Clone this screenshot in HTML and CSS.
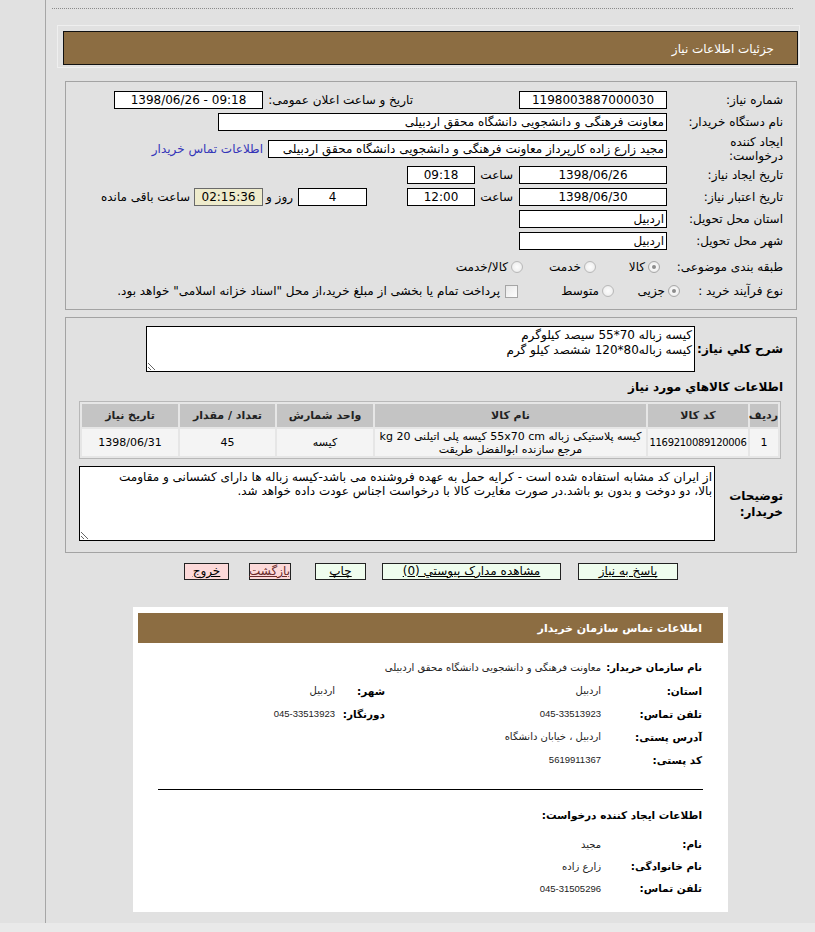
FILE: index.html
```html
<!DOCTYPE html>
<html lang="fa">
<head>
<meta charset="utf-8">
<title>جزئیات اطلاعات نیاز</title>
<link rel="stylesheet" href="styles.css">
</head>
<body>
<div class="page">
  <div class="topline"></div>
  <div class="titlewrap"><div class="title">جزئیات اطلاعات نیاز</div></div>

  <div class="box box1">
    <div class="row">
      <div class="lbl">شماره نیاز:</div>
      <div class="field c w148">1198003887000030</div>
      <div class="lbl2">تاریخ و ساعت اعلان عمومی:</div>
      <div class="field c w149" dir="ltr">1398/06/26 - 09:18</div>
    </div>
    <div class="row">
      <div class="lbl">نام دستگاه خریدار:</div>
      <div class="field w449">معاونت فرهنگی و دانشجویی دانشگاه محقق اردبیلی</div>
    </div>
    <div class="row row3">
      <div class="lbl two">ایجاد کننده<br>درخواست:</div>
      <div class="field w399">مجید زارع زاده کارپرداز معاونت فرهنگی و دانشجویی دانشگاه محقق اردبیلی</div>
      <a class="link" href="#">اطلاعات تماس خریدار</a>
    </div>
    <div class="row">
      <div class="lbl">تاریخ ایجاد نیاز:</div>
      <div class="field c w148">1398/06/26</div>
      <div class="saat">ساعت</div>
      <div class="field c w68">09:18</div>
    </div>
    <div class="row">
      <div class="lbl">تاریخ اعتبار نیاز:</div>
      <div class="field c w148">1398/06/30</div>
      <div class="saat">ساعت</div>
      <div class="field c w68">12:00</div>
      <div class="field c w69 days">4</div>
      <div class="rooz">روز و</div>
      <div class="field c w69 remain">02:15:36</div>
      <div class="remaintxt">ساعت باقی مانده</div>
    </div>
    <div class="row">
      <div class="lbl">استان محل تحویل:</div>
      <div class="field w148">اردبیل</div>
    </div>
    <div class="row">
      <div class="lbl">شهر محل تحویل:</div>
      <div class="field w148">اردبیل</div>
    </div>
    <div class="row row8">
      <div class="lbl">طبقه بندی موضوعی:</div>
      <div class="opts8">
        <div class="opt o1"><span class="radio on"></span><span class="otext">کالا</span></div>
        <div class="opt o2"><span class="radio"></span><span class="otext">خدمت</span></div>
        <div class="opt"><span class="radio"></span><span class="otext">کالا/خدمت</span></div>
      </div>
    </div>
    <div class="row row9">
      <div class="lbl l9">نوع فرآیند خرید :</div>
      <div class="opt p1"><span class="radio on"></span><span class="otext">جزیی</span></div>
      <div class="opt p2"><span class="radio"></span><span class="otext">متوسط</span></div>
      <div class="opt"><span class="check"></span><span class="ctext">پرداخت تمام یا بخشی از مبلغ خرید،از محل "اسناد خزانه اسلامی" خواهد بود.</span></div>
    </div>
  </div>

  <div class="box box2">
    <div class="descrow">
      <div class="blbl">شرح کلي نياز:</div>
      <textarea class="ta ta1" readonly>کیسه زباله 70*55 سیصد کیلوگرم
کیسه زباله80*120 ششصد کیلو گرم</textarea>
    </div>
    <div class="heading">اطلاعات کالاهاي مورد نياز</div>
    <table class="goods">
      <thead>
        <tr>
          <th class="c1">ردیف</th>
          <th class="c2">کد کالا</th>
          <th class="c3">نام کالا</th>
          <th class="c4">واحد شمارش</th>
          <th class="c5">تعداد / مقدار</th>
          <th class="c6">تاریخ نیاز</th>
        </tr>
      </thead>
      <tbody>
        <tr>
          <td>1</td>
          <td class="code">1169210089120006</td>
          <td class="name">کیسه پلاستیکی زباله 55x70 cm کیسه پلی اتیلنی 20 kg<br>مرجع سازنده ابوالفضل طریقت</td>
          <td>کیسه</td>
          <td>45</td>
          <td>1398/06/31</td>
        </tr>
      </tbody>
    </table>
    <div class="descrow notes">
      <div class="blbl nlbl">توضیحات<br>خریدار:</div>
      <textarea class="ta ta2" readonly>از ایران کد مشابه استفاده شده است - کرایه حمل به عهده فروشنده می باشد-کیسه زباله ها دارای کشسانی و مقاومت
بالا، دو دوخت و بدون بو باشد.در صورت مغایرت کالا با درخواست اجناس عودت داده خواهد شد.</textarea>
    </div>
  </div>

  <div class="buttons">
    <span class="btn green b1">پاسخ به نیاز</span>
    <span class="btn green b2">مشاهده مدارک پیوستي (0)</span>
    <span class="btn green b3">چاپ</span>
    <span class="btn pink b4">بازگشت</span>
    <span class="btn pink b5">خروج</span>
  </div>

  <div class="contact">
    <div class="chead">اطلاعات تماس سازمان خریدار</div>
    <div class="cbody">
      <div class="crow first">
        <div class="clbl tight">نام سازمان خریدار:</div>
        <div class="cval wide">معاونت فرهنگی و دانشجویی دانشگاه محقق اردبیلی</div>
      </div>
      <div class="crow">
        <div class="clbl">استان:</div>
        <div class="cval">اردبیل</div>
        <div class="clbl clbl2">شهر:</div>
        <div class="cval">اردبیل</div>
      </div>
      <div class="crow">
        <div class="clbl">تلفن تماس:</div>
        <div class="cval num">045-33513923</div>
        <div class="clbl clbl2">دورنگار:</div>
        <div class="cval num">045-33513923</div>
      </div>
      <div class="crow">
        <div class="clbl">آدرس پستی:</div>
        <div class="cval">اردبیل ، خیابان دانشگاه</div>
      </div>
      <div class="crow">
        <div class="clbl">کد پستی:</div>
        <div class="cval num">5619911367</div>
      </div>
    </div>
    <div class="cline"></div>
    <div class="cbody">
      <div class="crow chead2">اطلاعات ایجاد کننده درخواست:</div>
      <div class="crow r22 gap">
        <div class="clbl">نام:</div>
        <div class="cval">مجید</div>
      </div>
      <div class="crow r22">
        <div class="clbl">نام خانوادگی:</div>
        <div class="cval">زارع زاده</div>
      </div>
      <div class="crow r22">
        <div class="clbl">تلفن تماس:</div>
        <div class="cval num">045-31505296</div>
      </div>
    </div>
  </div>
</div>
<div class="footband"></div>
</body>
</html>
```

FILE: styles.css
```css
html, body {
  margin: 0;
  padding: 0;
}
body {
  background: #e1e1e1;
  font-family: "DejaVu Sans", sans-serif;
  font-size: 12px;
  color: #000;
}
.page {
  margin-left: 45px;
  border-left: 1px solid #a6a6a6;
  min-height: 923px;
  box-sizing: border-box;
}
.footband {
  height: 9px;
  background: #e9e9e9;
}
.topline {
  height: 8px;
  margin: 0 22px 0 6px;
  border-bottom: 1px dotted #8a8a8a;
}
.titlewrap {
  margin: 16px 15px 0 11px;
  border: 1px solid #efefef;
  padding: 5px 1px 2px 5px;
}
.title {
  background: #8c6d42;
  border: 1px solid #111;
  height: 34px;
  box-sizing: border-box;
  color: #fff;
  display: flex;
  align-items: center;
  padding: 2px 23px 0 0;
  direction: rtl;
}

.box {
  margin: 13px 18px 0 19px;
  border: 1px solid #a3a3a3;
  direction: rtl;
}
.box1 {
  padding: 7px 13px 9px 0;
}
.row {
  display: flex;
  align-items: center;
  height: 22px;
}
.row3 { height: 31px; }
.row8 { height: 30px; }
.row9 { height: 18px; }
.lbl {
  width: 116px;
  flex: none;
  white-space: nowrap;
}
.lbl.two { line-height: 14px; }
.l9 { width: 103px; }
.lbl2 {
  width: 150px;
  margin-right: 106px;
  flex: none;
  white-space: nowrap;
}
.field {
  height: 18px;
  box-sizing: border-box;
  border: 1px solid #000;
  background: #fff;
  line-height: 16px;
  padding: 0 2px;
  white-space: nowrap;
  overflow: hidden;
  flex: none;
}
.c { text-align: center; }
.w148 { width: 148px; }
.w149 { width: 149px; }
.w449 { width: 449px; }
.w399 { width: 399px; }
.w68 { width: 68px; }
.w69 { width: 69px; }
.link {
  margin-right: 5px;
  color: #3434b8;
  text-decoration: none;
  white-space: nowrap;
}
.saat {
  width: 38px;
  margin-right: 6px;
  flex: none;
}
.days { margin-right: 40px; }
.rooz {
  width: 30px;
  margin-right: 5px;
  flex: none;
}
.remain {
  background: #eeebcc;
  border-color: #6a6a6a;
}
.remaintxt {
  margin-right: 4px;
  white-space: nowrap;
}
.opts8 {
  display: flex;
  margin-right: 7px;
}
.opt {
  display: flex;
  align-items: center;
  flex: none;
}
.o1 { width: 64px; }
.o2 { width: 73px; }
.p1 { width: 66px; }
.p2 { width: 96px; }
.radio {
  width: 12px;
  height: 12px;
  border-radius: 50%;
  border: 1px solid #b9b9b9;
  background: radial-gradient(circle, #fdfdfd 0, #f2f2f2 55%, #dadada 100%);
  box-sizing: border-box;
  flex: none;
  position: relative;
}
.radio.on {
  border-color: #a8a8a8;
}
.radio.on::after {
  content: "";
  position: absolute;
  left: 3px;
  top: 3px;
  width: 4px;
  height: 4px;
  border-radius: 50%;
  background: #8c8c8c;
}
.otext {
  margin-right: 3px;
  white-space: nowrap;
}
.check {
  width: 13px;
  height: 13px;
  box-sizing: border-box;
  border: 1px solid #a5a5a5;
  background: linear-gradient(135deg, #e8e8e8, #fdfdfd);
  flex: none;
}
.ctext {
  margin-right: 5px;
  white-space: nowrap;
}

.box2 {
  margin-top: 7px;
  padding: 8px 13px 11px 0;
}
.descrow {
  display: flex;
  align-items: center;
}
.blbl {
  width: 88px;
  flex: none;
  font-weight: bold;
  white-space: nowrap;
}
.ta {
  font-family: "DejaVu Sans", sans-serif;
  font-size: 12px;
  color: #000;
  background: #fff;
  border: 1px solid #000;
  box-sizing: border-box;
  margin: 0;
  resize: both;
  direction: rtl;
  outline: none;
  overflow: hidden;
}
.ta1 {
  width: 549px;
  height: 46px;
  padding: 1px 2px;
  line-height: 15px;
}
.heading {
  margin-top: 7px;
  height: 16px;
  line-height: 16px;
  font-weight: bold;
}
.goods {
  margin: 6px 2px 0 0;
  width: 702px;
  table-layout: fixed;
  border: 1px solid #b8b8b8;
  border-spacing: 2px;
  background: #e6e6e6;
  font-size: 11px;
}
.goods th {
  background: #c4c4c4;
  height: 23px;
  padding: 0;
  font-weight: bold;
  color: #222;
  white-space: nowrap;
}
.goods td {
  background: #f4f4f4;
  height: 27px;
  padding: 0;
  text-align: center;
  line-height: 13px;
  white-space: nowrap;
}
.goods td.code {
  font-size: 10px;
  letter-spacing: -0.3px;
}
.c1 { width: 28px; }
.c2 { width: 100px; }
.c3 { width: 271px; }
.c4 { width: 96px; }
.c5 { width: 95px; }
.c6 { width: 96px; }
.notes {
  margin-top: 7px;
}
.nlbl {
  width: 68px;
  line-height: 16px;
}
.ta2 {
  width: 636px;
  height: 75px;
  padding: 3px 2px;
  line-height: 14px;
}

.buttons {
  margin: 10px 137px 0 0;
  display: flex;
  direction: rtl;
}
.btn {
  height: 17px;
  box-sizing: border-box;
  border: 1px solid #222;
  text-align: center;
  line-height: 15px;
  text-decoration: underline;
  white-space: nowrap;
  flex: none;
}
.green { background: #effdee; }
.pink { background: #fcd9d9; }
.b1 { width: 100px; }
.b2 { width: 179px; margin-right: 17px; }
.b3 { width: 51px; margin-right: 16px; }
.b4 { width: 42px; margin-right: 24px; color: #6b2a2a; }
.b5 { width: 45px; margin-right: 20px; }

.contact {
  margin: 27px 0 0 87px;
  width: 595px;
  background: #fff;
  padding: 6px 5px 13px;
  box-sizing: border-box;
  direction: rtl;
}
.chead {
  height: 30px;
  background: #8c6d42;
  color: #fff;
  font-weight: bold;
  font-size: 11px;
  display: flex;
  align-items: center;
  padding-right: 21px;
}
.cbody {
  padding: 0 21px 0 20px;
}
.crow {
  display: flex;
  align-items: center;
  height: 23px;
}
.crow.first { margin-top: 13px; }
.crow.r22 { height: 22px; }
.crow.gap { margin-top: 7px; }
.clbl {
  width: 101px;
  flex: none;
  font-weight: bold;
  font-size: 10.5px;
  white-space: nowrap;
}
.clbl.tight {
  font-size: 10px;
  letter-spacing: -0.2px;
}
.clbl2 { width: 50px; }
.cval {
  width: 216px;
  flex: none;
  font-size: 10px;
  color: #222;
  white-space: nowrap;
}
.cval.num {
  font-family: "Liberation Sans", "DejaVu Sans", sans-serif;
  font-size: 9.5px;
}
.cval.wide { width: auto; }
.cline {
  margin: 18px 20px 0;
  border-top: 1px solid #000;
}
.chead2 {
  margin-top: 13px;
  font-weight: bold;
  font-size: 10.5px;
}
```
